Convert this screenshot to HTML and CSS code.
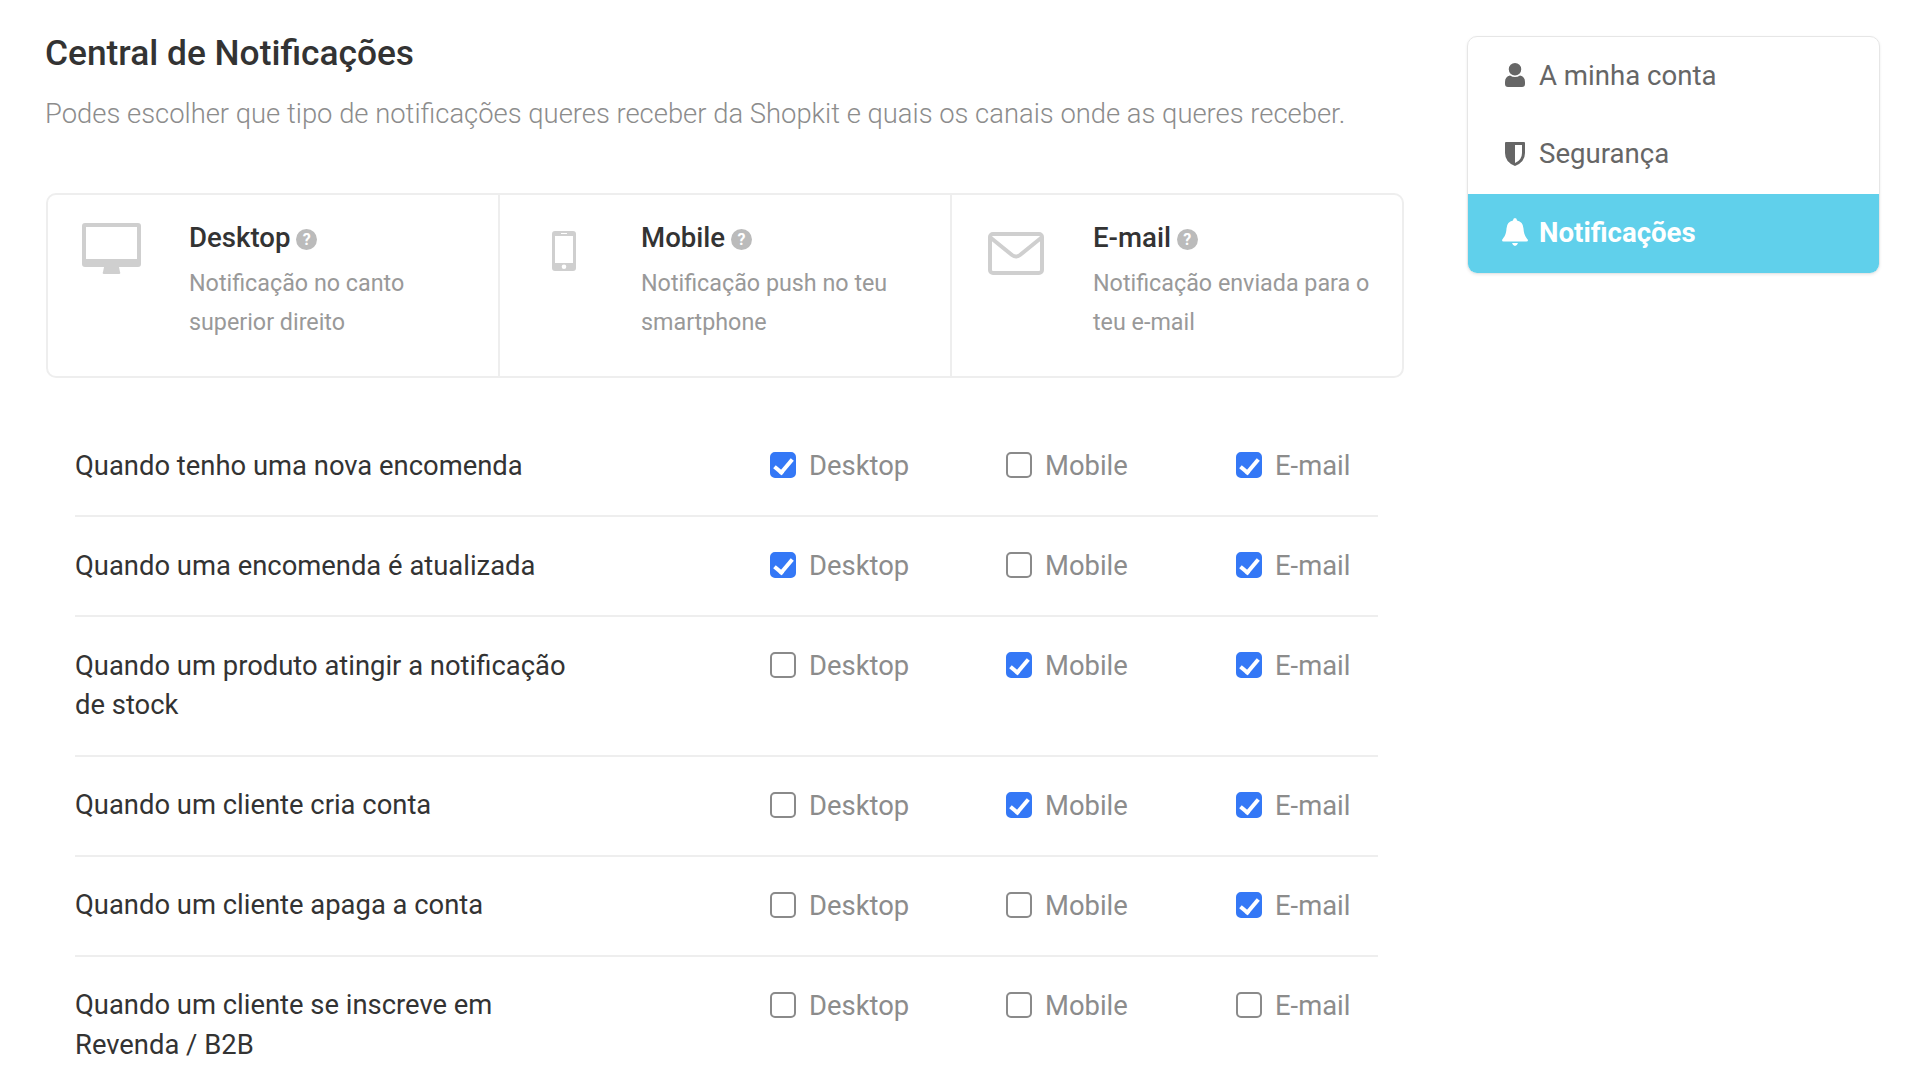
FILE: index.html
```html
<!DOCTYPE html>
<html lang="pt">
<head>
    <meta charset="UTF-8">
    <title>Central de Notificações</title>
    <link rel="stylesheet" href="styles.css">
</head>
<body>
    <div class="page">
        <main class="content">
            <h1>Central de Notificações</h1>
            <p class="intro">Podes escolher que tipo de notificações queres receber da Shopkit e quais os canais onde as queres receber.</p>

            <div class="channels">
                <div class="channel">
                    <svg class="channel-icon" width="60" height="52" viewBox="0 0 60 52"><path fill-rule="evenodd" fill="#cfcfcf" d="M3 0h53a3 3 0 0 1 3 3v38a3 3 0 0 1-3 3H3a3 3 0 0 1-3-3V3a3 3 0 0 1 3-3zM4 4v32h51V4zM22 44h15l1 5q1 2-1 2H22q-2 0-1-2z"/></svg>
                    <div>
                        <h3>Desktop <span class="help">?</span></h3>
                        <p>Notificação no canto superior direito</p>
                    </div>
                </div>
                <div class="channel">
                    <svg class="channel-icon" width="60" height="52" viewBox="-18 -8 60 52"><path fill-rule="evenodd" fill="#cfcfcf" d="M3 0h18a3 3 0 0 1 3 3v34a3 3 0 0 1-3 3H3a3 3 0 0 1-3-3V3a3 3 0 0 1 3-3zM3 5v27h18V5zM9 2v1h6V2zM12 33.500a2.300 2.300 0 1 0 0 4.600a2.300 2.300 0 1 0 0-4.600z"/></svg>
                    <div>
                        <h3>Mobile <span class="help">?</span></h3>
                        <p>Notificação push no teu smartphone</p>
                    </div>
                </div>
                <div class="channel">
                    <svg class="channel-icon" width="60" height="52" viewBox="-2 -9 60 52"><rect x="2" y="2" width="52" height="39" rx="3" fill="none" stroke="#cfcfcf" stroke-width="4"/><path d="M3 6l21 17q4 3 8 0l21-17" fill="none" stroke="#cfcfcf" stroke-width="4"/></svg>
                    <div>
                        <h3>E-mail <span class="help">?</span></h3>
                        <p>Notificação enviada para o teu e-mail</p>
                    </div>
                </div>
            </div>

            <div class="rows">
                <div class="row">
                    <div class="row-label">Quando tenho uma nova encomenda</div>
                    <label class="opt"><input type="checkbox" checked> Desktop</label>
                    <label class="opt"><input type="checkbox"> Mobile</label>
                    <label class="opt"><input type="checkbox" checked> E-mail</label>
                </div>
                <div class="row">
                    <div class="row-label">Quando uma encomenda é atualizada</div>
                    <label class="opt"><input type="checkbox" checked> Desktop</label>
                    <label class="opt"><input type="checkbox"> Mobile</label>
                    <label class="opt"><input type="checkbox" checked> E-mail</label>
                </div>
                <div class="row">
                    <div class="row-label">Quando um produto atingir a notificação de stock</div>
                    <label class="opt"><input type="checkbox"> Desktop</label>
                    <label class="opt"><input type="checkbox" checked> Mobile</label>
                    <label class="opt"><input type="checkbox" checked> E-mail</label>
                </div>
                <div class="row">
                    <div class="row-label">Quando um cliente cria conta</div>
                    <label class="opt"><input type="checkbox"> Desktop</label>
                    <label class="opt"><input type="checkbox" checked> Mobile</label>
                    <label class="opt"><input type="checkbox" checked> E-mail</label>
                </div>
                <div class="row">
                    <div class="row-label">Quando um cliente apaga a conta</div>
                    <label class="opt"><input type="checkbox"> Desktop</label>
                    <label class="opt"><input type="checkbox"> Mobile</label>
                    <label class="opt"><input type="checkbox" checked> E-mail</label>
                </div>
                <div class="row">
                    <div class="row-label">Quando um cliente se inscreve em Revenda / B2B</div>
                    <label class="opt"><input type="checkbox"> Desktop</label>
                    <label class="opt"><input type="checkbox"> Mobile</label>
                    <label class="opt"><input type="checkbox"> E-mail</label>
                </div>
            </div>
        </main>

        <nav class="sidebar">
            <a class="side-item">
                <svg width="20" height="24" viewBox="0 0 20 24"><path fill="currentColor" d="M10 0a6 6 0 1 1 0 12.500a6 6 0 1 1 0-12.500zM5 12.500q5 3 10 0q5 1 5 6.500v2q0 3-3 3H3q-3 0-3-3v-2q0-5.500 5-6.500z"/></svg>
                A minha conta
            </a>
            <a class="side-item">
                <svg width="20" height="24" viewBox="0 0 20 24"><path fill="currentColor" fill-rule="evenodd" d="M1 0h18q1 0 1 1v10q0 9-10 13Q0 20 0 11V1q0-1 1-1zM10 3v18q7-3 7-10V3z"/></svg>
                Segurança
            </a>
            <a class="side-item active">
                <svg width="26" height="28" viewBox="0 0 26 28"><path fill="currentColor" d="M13 0q2 0 2 2.500q6 1 6.500 8c.3 6 2 8 4.500 11.500q0 1.500-1.500 1.500H1.500Q0 23.500 0 22c2.500-3.500 4.200-5.500 4.500-11.500q.5-7 6.500-8Q11 0 13 0zM10 25h6q-1 3-3 3t-3-3z"/></svg>
                Notificações
            </a>
        </nav>
    </div>
</body>
</html>
```

FILE: styles.css
```css
* {
    box-sizing: border-box;
}

body {
    margin: 0;
    background-color: #fff;
    font-family: Roboto, "Liberation Sans", sans-serif;
    color: #333;
    overflow: hidden;
}

.page {
    display: flex;
    align-items: flex-start;
    padding: 35px 40px 0 45px;
    height: 1088px;
}

.content {
    width: 1360px;
}

h1 {
    margin: 0;
    font-size: 35.300px;
    line-height: 36px;
    font-weight: 500;
    color: #333;
}

.intro {
    margin: 25px 0 0;
    font-size: 27.400px;
    line-height: 36px;
    font-weight: 300;
    color: #8c8c8c;
}

.channels {
    display: flex;
    margin: 61px 0 0 1px;
    width: 1358px;
    height: 185px;
    border: 2px solid #eee;
    border-radius: 10px;
}

.channel {
    flex: 1;
    display: flex;
    padding: 24.500px 30px 0 34px;
    border-right: 2px solid #eee;
}

.channel:last-child {
    border-right: none;
}

.channel-icon {
    flex: none;
    margin: 3.500px 47px 0 0;
}

.channel h3 {
    margin: 0;
    font-size: 27.600px;
    line-height: 36px;
    font-weight: 500;
    color: #333;
}

.channel p {
    margin: 8px 0 0;
    font-size: 23.300px;
    line-height: 39px;
    color: #999;
}

.help {
    display: inline-block;
    width: 21px;
    height: 21px;
    margin-left: -1px;
    border-radius: 50%;
    background-color: #bbb;
    color: #fff;
    font-size: 16px;
    line-height: 21px;
    font-weight: 700;
    text-align: center;
    vertical-align: 2px;
}

.rows {
    margin: 39px 27px 0 30px;
}

.row {
    display: grid;
    grid-template-columns: 695px 236px 230px 1fr;
    padding: 29px 0;
    border-bottom: 2px solid #eee;
}

.row:last-child {
    border-bottom: none;
}

.row-label {
    max-width: 510px;
    padding-top: 0.500px;
    font-size: 27.400px;
    line-height: 39.500px;
    color: #333;
}

.opt {
    display: flex;
    align-items: center;
    height: 40px;
    gap: 13px;
    font-size: 27.400px;
    color: #8c8c8c;
}

input[type="checkbox"] {
    appearance: none;
    position: relative;
    flex: none;
    width: 26px;
    height: 26px;
    margin: -2px 0 0;
    border: 2px solid #8a8a8a;
    border-radius: 5px;
    background-color: #fff;
}

input[type="checkbox"]:checked {
    border-color: #3478f6;
    background-color: #3478f6;
}

input[type="checkbox"]:checked::after {
    content: "";
    position: absolute;
    left: 6px;
    top: 1px;
    width: 7px;
    height: 15px;
    border: solid #fff;
    border-width: 0 4px 4px 0;
    transform: rotate(40deg);
}

.sidebar {
    width: 413px;
    margin: 1px 0 0 62px;
    border: 1px solid #e6e6e6;
    border-radius: 10px;
    box-shadow: 0 1px 3px rgba(0, 0, 0, 0.08);
    overflow: hidden;
}

.side-item {
    display: flex;
    align-items: center;
    height: 78.500px;
    padding: 0 0 2px 37px;
    font-size: 27.600px;
    color: #666;
}

.side-item svg {
    flex: none;
    margin-right: 14px;
}

.side-item.active {
    background-color: #60d0eb;
    color: #fff;
    font-weight: 700;
}

.side-item.active svg {
    margin: 0 11px 0 -3px;
}
```
